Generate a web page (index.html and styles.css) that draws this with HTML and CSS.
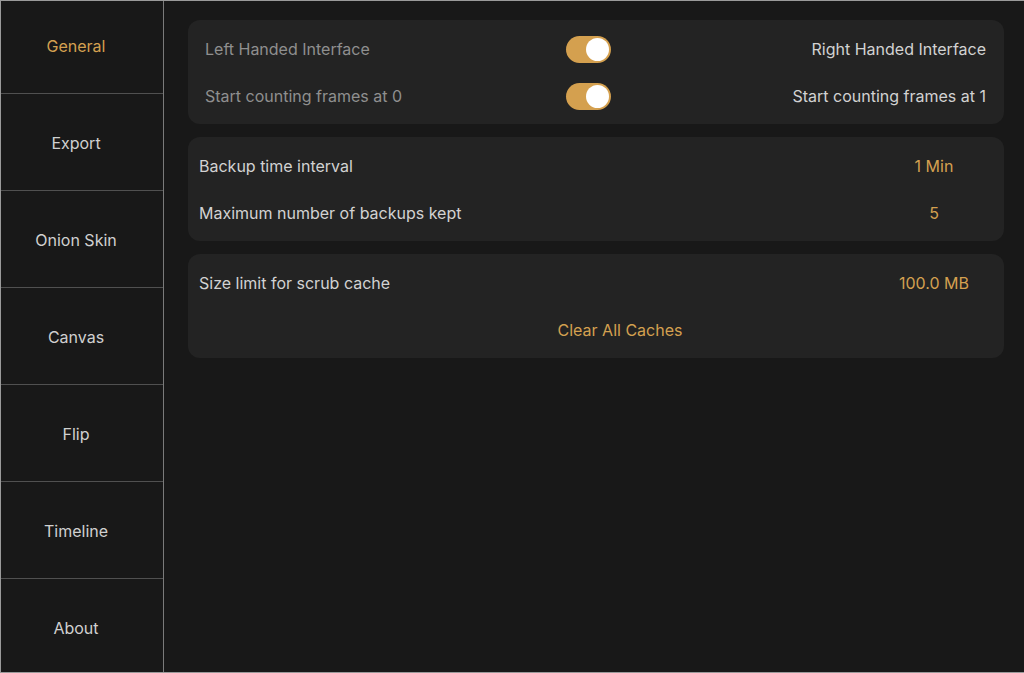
FILE: index.html
```html
<!DOCTYPE html>
<html>
<head>
<meta charset="utf-8">
<link rel="stylesheet" href="styles.css">
</head>
<body>
<div class="frame">
  <nav class="sidebar">
    <div class="nav-list">
      <div class="nav-item active">General</div>
      <div class="nav-item">Export</div>
      <div class="nav-item">Onion Skin</div>
      <div class="nav-item">Canvas</div>
      <div class="nav-item">Flip</div>
      <div class="nav-item">Timeline</div>
      <div class="nav-item">About</div>
    </div>
  </nav>
  <main class="content">
    <section class="card card-toggles">
      <div class="toggle-row">
        <span class="label-dim">Left Handed Interface</span>
        <span class="switch"><span class="knob"></span></span>
        <span class="label-right">Right Handed Interface</span>
      </div>
      <div class="toggle-row">
        <span class="label-dim">Start counting frames at 0</span>
        <span class="switch"><span class="knob"></span></span>
        <span class="label-right">Start counting frames at 1</span>
      </div>
    </section>
    <section class="card card-values">
      <div class="value-row">
        <span class="label">Backup time interval</span>
        <span class="value">1 Min</span>
      </div>
      <div class="value-row">
        <span class="label">Maximum number of backups kept</span>
        <span class="value">5</span>
      </div>
    </section>
    <section class="card card-values">
      <div class="value-row">
        <span class="label">Size limit for scrub cache</span>
        <span class="value">100.0 MB</span>
      </div>
      <div class="action-row">
        <span class="action">Clear All Caches</span>
      </div>
    </section>
  </main>
</div>
</body>
</html>
```
FILE: styles.css
```css
* { box-sizing: border-box; }
html, body {
  margin: 0;
  padding: 0;
  background: #181818;
}
body {
  font-family: Inter, "Noto Sans", "Liberation Sans", sans-serif;
  font-size: 16px;
  color: #d2d2d2;
}
.frame {
  width: 1024px;
  height: 673px;
  display: flex;
  border-top: 1px solid #9a9a9a;
  border-left: 1px solid #9a9a9a;
  border-bottom: 1px solid #9a9a9a;
  background: #181818;
  overflow: hidden;
}
.sidebar {
  width: 163px;
  flex: none;
  border-right: 1px solid #7a7a7a;
  overflow: hidden;
}
.nav-list {
  margin-top: -4px;
  display: flex;
  flex-direction: column;
}
.nav-item {
  height: 97px;
  flex: none;
  border-bottom: 1px solid #505050;
  display: flex;
  align-items: center;
  justify-content: center;
  padding: 2px 12px 0 0;
  color: #d0d0d0;
}
.nav-item.active { color: #d4a050; }
.content {
  flex: 1;
  padding: 19px 20px 0 24px;
  display: flex;
  flex-direction: column;
  gap: 13px;
}
.card {
  background: #232323;
  border-radius: 12px;
  padding: 5px 0;
}
.toggle-row {
  height: 47px;
  display: grid;
  grid-template-columns: 361px auto 1fr;
  align-items: center;
  padding: 1px 18px 0 17px;
}
.label-dim { color: #8f8f8f; }
.label-right { justify-self: end; color: #d2d2d2; }
.switch {
  width: 45px;
  height: 27px;
  border-radius: 14px;
  background: #d4a04f;
  position: relative;
  display: block;
}
.knob {
  position: absolute;
  right: 2px;
  top: 2px;
  width: 23px;
  height: 23px;
  border-radius: 50%;
  background: #ffffff;
}
.value-row {
  height: 47px;
  display: grid;
  grid-template-columns: 1fr 100px;
  align-items: center;
  padding: 1px 20px 0 11px;
}
.value {
  text-align: center;
  color: #d4a050;
}
.action-row {
  height: 47px;
  display: flex;
  align-items: center;
  justify-content: center;
  padding: 1px 0 0 48px;
}
.action { color: #d4a050; }
```
